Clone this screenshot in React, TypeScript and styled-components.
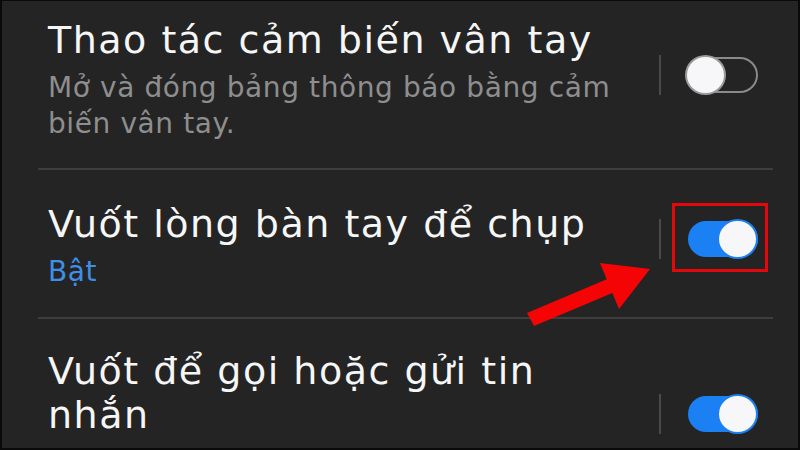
import React from 'react';
import styled, { createGlobalStyle } from 'styled-components';

const GlobalStyle = createGlobalStyle`
  html, body {
    margin: 0;
    padding: 0;
    background: #242424;
  }
  * {
    box-sizing: border-box;
  }
`;

const Screen = styled.div`
  position: relative;
  width: 800px;
  height: 450px;
  overflow: hidden;
  background: #242424;
  border: 2px solid #0a0a0a;
  border-top-width: 1px;
  font-family: 'DejaVu Sans', Roboto, sans-serif;
`;

const List = styled.div`
  display: flex;
  flex-direction: column;
  width: 735px;
  margin-left: 36px;
`;

const Row = styled.div<{ $top: number; $bottom: number; $last?: boolean }>`
  display: flex;
  align-items: flex-start;
  padding: ${(p) => p.$top}px 15px ${(p) => p.$bottom}px 10px;
  border-bottom: ${(p) => (p.$last ? 'none' : '2px solid #3e3e3e')};
`;

const TextCol = styled.div`
  flex: 1;
  min-width: 0;
  padding-right: 30px;
`;

const Title = styled.div`
  color: #f6f6f6;
  font-size: 38px;
  line-height: 44px;
  letter-spacing: 1.5px;
`;

const Sub = styled.div<{ $on?: boolean }>`
  margin-top: 8px;
  color: ${(p) => (p.$on ? '#3f8fe6' : '#8e8e8e')};
  font-size: 28px;
  line-height: 36px;
  letter-spacing: 0.6px;
`;

const Control = styled.div<{ $offset: number }>`
  display: flex;
  align-items: center;
  margin-top: ${(p) => p.$offset}px;
`;

const Divider = styled.div`
  width: 2px;
  height: 40px;
  background: #4a4a4a;
  margin-right: 24px;
`;

const SwitchWrap = styled.div`
  position: relative;
  width: 73px;
  height: 40px;
  display: flex;
  align-items: center;
  justify-content: flex-end;
`;

const Track = styled.div<{ $on?: boolean }>`
  position: relative;
  width: 70px;
  height: 36px;
  border-radius: 18px;
  background: ${(p) => (p.$on ? '#1b80f4' : 'transparent')};
  box-shadow: ${(p) => (p.$on ? 'none' : 'inset 0 0 0 2px #8a8a8a')};
`;

const Knob = styled.div<{ $on?: boolean }>`
  position: absolute;
  top: -2px;
  ${(p) => (p.$on ? 'right: 0;' : 'left: -3px;')}
  width: 41px;
  height: 40px;
  border-radius: 50%;
  background: #f7f7f9;
  border: 2px solid ${(p) => (p.$on ? '#1b80f4' : '#9a9a9a')};
`;

const Highlight = styled.div`
  position: absolute;
  top: -16px;
  left: -13px;
  right: -10px;
  bottom: -13px;
  border: 3px solid #e3080b;
  pointer-events: none;
`;

const Arrow = styled.svg`
  position: absolute;
  left: 520px;
  top: 255px;
`;

const Switch = ({ on, marked }: { on?: boolean; marked?: boolean }) => (
  <SwitchWrap>
    <Track $on={on}>
      <Knob $on={on} />
    </Track>
    {marked && <Highlight />}
  </SwitchWrap>
);

export default function App() {
  return (
    <>
      <GlobalStyle />
      <Screen>
        <List>
          <Row $top={17} $bottom={26}>
            <TextCol>
              <Title>Thao tác cảm biến vân tay</Title>
              <Sub>Mở và đóng bảng thông báo bằng cảm biến vân tay.</Sub>
            </TextCol>
            <Control $offset={37}>
              <Divider />
              <Switch />
            </Control>
          </Row>
          <Row $top={32} $bottom={27}>
            <TextCol>
              <Title>Vuốt lòng bàn tay để chụp</Title>
              <Sub $on>Bật</Sub>
            </TextCol>
            <Control $offset={17}>
              <Divider />
              <Switch on marked />
            </Control>
          </Row>
          <Row $top={30} $bottom={0} $last>
            <TextCol>
              <Title>Vuốt để gọi hoặc gửi tin nhắn</Title>
            </TextCol>
            <Control $offset={45}>
              <Divider />
              <Switch on />
            </Control>
          </Row>
        </List>
        <Arrow width="140" height="80" viewBox="0 0 140 80">
          <polygon
            points="128,13 78,7 84.7,23.3 5,57 12,70 90.4,36.9 97,53"
            fill="#f40404"
          />
        </Arrow>
      </Screen>
    </>
  );
}
